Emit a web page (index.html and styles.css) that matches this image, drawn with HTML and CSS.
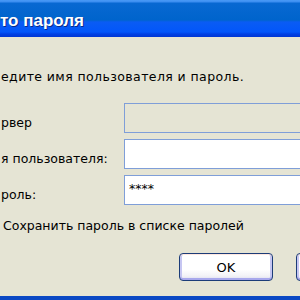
FILE: index.html
```html
<!DOCTYPE html>
<html lang="ru">
<head>
    <meta charset="UTF-8">
    <title>Ввод пароля</title>
    <link rel="stylesheet" href="styles.css">
</head>
<body>
    <div class="window">
        <div class="titlebar">
            <span class="title">то пароля</span>
        </div>

        <div class="dialog">
            <p class="prompt">едите имя пользователя и пароль.</p>

            <div class="fields">
                <label class="label">рвер</label>
                <div class="input disabled"></div>

                <label class="label">я пользователя:</label>
                <div class="input"></div>

                <label class="label">роль:</label>
                <div class="input">****</div>
            </div>

            <p class="remember">Сохранить пароль в списке паролей</p>

            <div class="buttons">
                <button class="btn default">OK</button>
                <!-- cancel button runs past the right edge, its caption is out of view -->
                <button class="btn" aria-label="Отмена"></button>
            </div>
        </div>
    </div>
</body>
</html>
```

FILE: styles.css
```css
body {
    margin: 0;
    width: 300px;
    height: 300px;
    overflow: hidden;
    font-family: 'DejaVu Sans', sans-serif;
}

.window {
    display: flex;
    flex-direction: column;
    height: 300px;
    background: #e5e4d4;
    border-bottom: 4px solid #0a48c4;
    box-sizing: border-box;
}

/* XP style caption */
.titlebar {
    height: 37px;
    flex-shrink: 0;
    display: flex;
    align-items: center;
    background: linear-gradient(to bottom,
        #4a9af6 0, #3a8cf0 2px,
        #0868d2 3px, #0064cc 20px,
        #0a5cf4 22px, #0256fa 32px,
        #0040e4 34px, #0036d4 37px);
}

.title {
    color: #fff;
    font-family: 'Liberation Sans', sans-serif;
    font-weight: bold;
    font-size: 17px;
    margin-top: 5px;
    text-shadow: 1px 1px 0 #0a2a8a;
}

.dialog {
    flex: 1;
    display: flex;
    flex-direction: column;
    padding: 0 0 0 1px;
    font-size: 12.5px;
    color: #000;
}

.prompt {
    margin: 32px 0 0 0;
    line-height: 16px;
    letter-spacing: 0.4px;
}

.fields {
    display: grid;
    grid-template-columns: 123px 200px;
    grid-auto-rows: 30px;
    row-gap: 6px;
    margin-top: 18px;
    align-items: center;
}

.label {
    line-height: 16px;
    margin-top: 9px;
}

.input {
    height: 30px;
    box-sizing: border-box;
    border: 1px solid #7f9ed8;
    background: #fff;
    padding: 5px 4px;
    font-size: 12.5px;
    line-height: 16px;
}

.input.disabled {
    background: #e5e4d4;
}

.remember {
    margin: 13px 0 0 2px;
    line-height: 16px;
}

.buttons {
    display: flex;
    gap: 23px;
    margin-top: 19px;
    padding-left: 178px;
}

.btn {
    flex-shrink: 0;
    width: 94px;
    height: 28px;
    border: 1px solid #1c3c78;
    border-radius: 4px;
    background: linear-gradient(to bottom, #fff 0, #fff 60%, #f2f2f6 85%, #d8d8ee 100%);
    box-shadow: inset 0 1px 0 #ffe8e0, inset 0 -2px 0 #a8a8ec, inset 2px 0 0 #c6c6f2, inset -2px 0 0 #c6c6f2;
    font-family: 'DejaVu Sans', sans-serif;
    font-size: 13px;
    color: #000;
    padding: 0;
}
```
